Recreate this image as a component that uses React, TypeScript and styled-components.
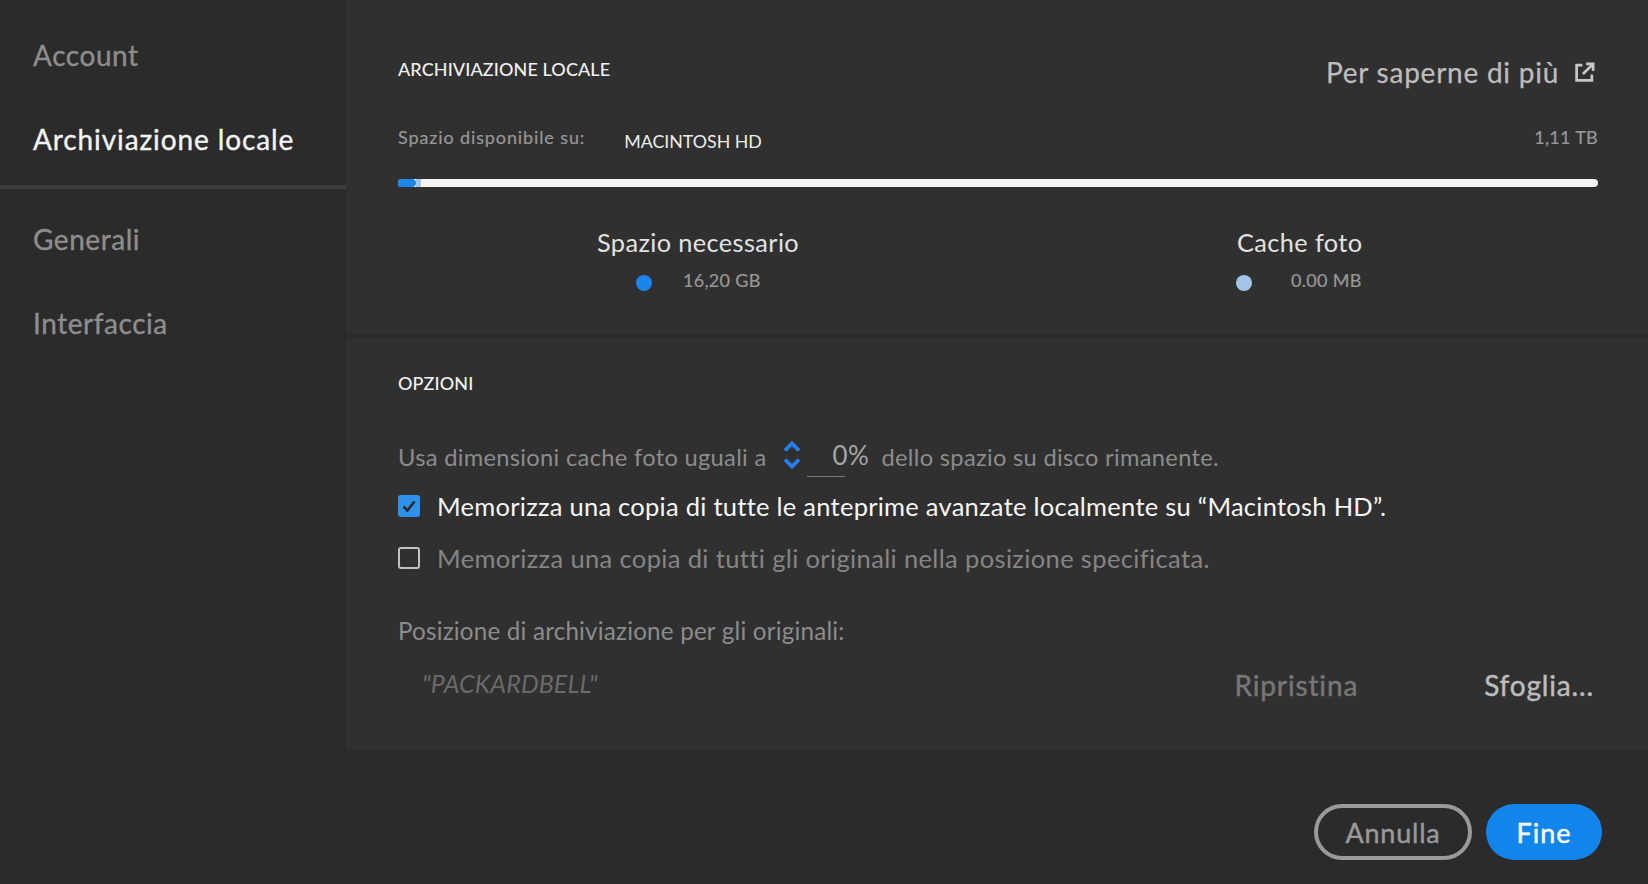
import React from "react";
import styled, { createGlobalStyle } from "styled-components";

const GlobalStyle = createGlobalStyle`
    html, body {
        margin: 0;
        padding: 0;
        height: 100%;
        background: #2b2b2b;
        overflow: hidden;
    }
    body, button {
        font-family: "Lato", "Noto Sans", sans-serif;
    }
`;

const navItems = [
    { label: "Account", active: false },
    { label: "Archiviazione locale", active: true },
    { label: "Generali", active: false },
    { label: "Interfaccia", active: false },
];

const ExternalIcon = () => (
    <svg width="21" height="21" viewBox="0 0 20 20" fill="none" stroke="#c8c8c8" strokeWidth="2.6">
        <path d="M8 3H2.5v14.5H17V12" />
        <path d="M8.5 11.5 17.5 2.5M11.5 1.8h6.7v6.7" />
    </svg>
);

const Stepper = () => (
    <svg width="18" height="30" viewBox="0 0 18 30" fill="none" stroke="#2680eb" strokeWidth="3.8">
        <path d="M2 10.5 9 3.5l7 7M2 19.5l7 7 7-7" />
    </svg>
);

export default function App() {
    return (
        <>
            <GlobalStyle />
            <Page>
                <Sidebar>
                    {navItems.map((item) => (
                        <NavItem key={item.label} $active={item.active}>
                            {item.label}
                        </NavItem>
                    ))}
                </Sidebar>
                <Main>
                    <StoragePanel>
                        <TitleRow>
                            <SectionTitle>ARCHIVIAZIONE LOCALE</SectionTitle>
                            <LearnMore>
                                Per saperne di più
                                <ExternalIcon />
                            </LearnMore>
                        </TitleRow>
                        <DiskRow>
                            <DiskLabel>Spazio disponibile su:</DiskLabel>
                            <DiskName>MACINTOSH HD</DiskName>
                            <DiskSize>1,11 TB</DiskSize>
                        </DiskRow>
                        <Bar>
                            <BarCache />
                            <BarUsed />
                        </Bar>
                        <Legend>
                            <LegendItem>
                                <LegendTitle>Spazio necessario</LegendTitle>
                                <LegendValue $indent={39} $gap={31}>
                                    <Dot $color="#1b86ea" />
                                    <SmallLabel>16,20 GB</SmallLabel>
                                </LegendValue>
                            </LegendItem>
                            <LegendItem>
                                <LegendTitle>Cache foto</LegendTitle>
                                <LegendValue $indent={-1} $gap={39}>
                                    <Dot $color="#a3c5ea" />
                                    <SmallLabel>0.00 MB</SmallLabel>
                                </LegendValue>
                            </LegendItem>
                        </Legend>
                    </StoragePanel>
                    <OptionsPanel>
                        <SectionTitle>OPZIONI</SectionTitle>
                        <CacheRow>
                            <span>Usa dimensioni cache foto uguali a</span>
                            <Stepper />
                            <PercentField>0%</PercentField>
                            <span>dello spazio su disco rimanente.</span>
                        </CacheRow>
                        <CheckRow>
                            <Checkbox $checked>
                                <svg width="16" height="16" viewBox="0 0 16 16" fill="none" stroke="#2b2b2b" strokeWidth="2.6">
                                    <path d="M2.5 8.5 6.3 12.5 13.5 3.5" />
                                </svg>
                            </Checkbox>
                            <CheckText $checked>
                                Memorizza una copia di tutte le anteprime avanzate localmente su “Macintosh HD”.
                            </CheckText>
                        </CheckRow>
                        <CheckRow>
                            <Checkbox />
                            <CheckText>Memorizza una copia di tutti gli originali nella posizione specificata.</CheckText>
                        </CheckRow>
                        <LocationLabel>Posizione di archiviazione per gli originali:</LocationLabel>
                        <LocationRow>
                            <LocationName>"PACKARDBELL"</LocationName>
                            <TextAction $dim>Ripristina</TextAction>
                            <TextAction>Sfoglia...</TextAction>
                        </LocationRow>
                    </OptionsPanel>
                    <Footer>
                        <CancelButton>Annulla</CancelButton>
                        <DoneButton>Fine</DoneButton>
                    </Footer>
                </Main>
            </Page>
        </>
    );
}

const Page = styled.div`
    display: grid;
    grid-template-columns: 346px 1fr;
    width: 1648px;
    height: 884px;
    background: #2b2b2b;
    overflow: hidden;
`;

const Sidebar = styled.nav`
    display: flex;
    flex-direction: column;
    padding-top: 13px;
`;

const NavItem = styled.div<{ $active: boolean }>`
    display: flex;
    align-items: center;
    height: 84px;
    padding-left: 33px;
    padding-bottom: ${(p) => (p.$active ? "4px" : "0")};
    margin-bottom: ${(p) => (p.$active ? "8px" : "0")};
    font-size: 28px;
    letter-spacing: ${(p) => (p.$active ? "0.9px" : "0.55px")};
    -webkit-text-stroke: 0.35px currentColor;
    color: ${(p) => (p.$active ? "#f4f4f4" : "#8e8e8e")};
    border-bottom: ${(p) => (p.$active ? "4px solid #3c3c3c" : "none")};
`;

const Main = styled.main`
    display: flex;
    flex-direction: column;
`;

const StoragePanel = styled.section`
    height: 334px;
    box-sizing: border-box;
    padding: 0 50px 0 52px;
    background: #303030;
    margin-bottom: 4px;
`;

const OptionsPanel = styled.section`
    height: 412px;
    box-sizing: border-box;
    padding: 34px 50px 0 52px;
    background: #303030;
`;

const SectionTitle = styled.h2`
    margin: 0;
    font-size: 18px;
    line-height: 22px;
    font-weight: 500;
    letter-spacing: 0.1px;
    color: #f0f0f0;
`;

const TitleRow = styled.div`
    display: flex;
    justify-content: space-between;
    align-items: center;
    height: 72px;
    padding-top: 36px;
    ${SectionTitle} {
        margin-bottom: 6px;
    }
`;

const LearnMore = styled.div`
    display: flex;
    align-items: center;
    gap: 15px;
    font-size: 28px;
    letter-spacing: 0.75px;
    -webkit-text-stroke: 0.25px currentColor;
    color: #bdbdbd;
    margin-right: 3px;
`;

const DiskRow = styled.div`
    display: flex;
    align-items: center;
    height: 30px;
    margin-top: 14px;
`;

const SmallLabel = styled.span`
    font-size: 18px;
    letter-spacing: 0.3px;
    -webkit-text-stroke: 0.2px currentColor;
    color: #989898;
`;

const DiskLabel = styled(SmallLabel)`
    letter-spacing: 0.88px;
`;

const DiskName = styled.span`
    font-size: 17.8px;
    margin: 7px 0 0 39px;
    color: #ececec;
`;

const DiskSize = styled(SmallLabel)`
    margin-left: auto;
`;

const Bar = styled.div`
    display: flex;
    height: 8px;
    margin-top: 27px;
    width: 1200px;
    background: #f4f4f4;
    border-radius: 4px;
    overflow: hidden;
    flex-direction: row-reverse;
    justify-content: flex-end;
`;

const BarUsed = styled.div`
    width: 18px;
    background: #1b86ea;
    border-radius: 0 4px 4px 0;
`;

const BarCache = styled.div`
    width: 5px;
    background: #a3c5ea;
`;

const Legend = styled.div`
    display: grid;
    grid-template-columns: 640px 1fr;
    padding: 38px 0 0 199px;
`;

const LegendItem = styled.div`
    display: flex;
    flex-direction: column;
`;

const LegendTitle = styled.div`
    font-size: 25.3px;
    line-height: 34px;
    letter-spacing: 0.4px;
    color: #e2e2e2;
`;

const LegendValue = styled.div<{ $indent: number; $gap: number }>`
    display: flex;
    align-items: center;
    gap: ${(p) => p.$gap}px;
    margin-top: 9px;
    margin-left: ${(p) => p.$indent}px;
`;

const Dot = styled.span<{ $color: string }>`
    width: 16px;
    height: 16px;
    margin-top: 7px;
    border-radius: 50%;
    background: ${(p) => p.$color};
`;

const CacheRow = styled.div`
    display: flex;
    align-items: center;
    height: 40px;
    margin-top: 43px;
    font-size: 23.7px;
    letter-spacing: 0.3px;
    color: #8c8c8c;
    svg {
        margin: -4px 6px 0 16px;
    }
`;

const PercentField = styled.span`
    width: 37px;
    height: 40px;
    margin-right: 12px;
    padding-left: 26px;
    font-size: 26px;
    line-height: 36px;
    color: #a6a6a6;
    white-space: nowrap;
    background: linear-gradient(#7a7a7a, #7a7a7a) left 39px / 38px 1px no-repeat;
`;

const CheckRow = styled.div`
    display: flex;
    align-items: center;
    gap: 17px;
    height: 52px;
    &:nth-of-type(2) {
        margin-top: 3px;
    }
`;

const Checkbox = styled.span<{ $checked?: boolean }>`
    display: flex;
    align-items: center;
    justify-content: center;
    width: 22px;
    height: 22px;
    box-sizing: border-box;
    border-radius: 3px;
    background: ${(p) => (p.$checked ? "#2d92ee" : "transparent")};
    border: ${(p) => (p.$checked ? "none" : "2px solid #c2c2c2")};
`;

const CheckText = styled.span<{ $checked?: boolean }>`
    font-size: 25.5px;
    letter-spacing: ${(p) => (p.$checked ? "0.26px" : "0.36px")};
    color: ${(p) => (p.$checked ? "#f6f6f6" : "#858585")};
`;

const LocationLabel = styled.div`
    margin-top: 30px;
    font-size: 24.2px;
    line-height: 34px;
    letter-spacing: 0.2px;
    color: #8c8c8c;
`;

const LocationRow = styled.div`
    display: flex;
    align-items: center;
    height: 40px;
    margin-top: 15px;
`;

const LocationName = styled.span`
    margin: 0 auto 0 24px;
    font-size: 25px;
    font-style: italic;
    letter-spacing: 0.1px;
    color: #6a6a6a;
`;

const TextAction = styled.span<{ $dim?: boolean }>`
    padding-top: 3px;
    font-size: 28px;
    letter-spacing: 0.85px;
    -webkit-text-stroke: 0.45px currentColor;
    color: ${(p) => (p.$dim ? "#777777" : "#bcbcbc")};
    margin: ${(p) => (p.$dim ? "0 126px 0 0" : "0 4px 0 0")};
`;

const Footer = styled.footer`
    display: flex;
    justify-content: flex-end;
    gap: 14px;
    padding: 54px 46px 0 0;
`;

const CancelButton = styled.button`
    width: 158px;
    height: 56px;
    border: 4px solid #9a9a9a;
    border-radius: 28px;
    background: transparent;
    font-size: 27px;
    letter-spacing: 0.8px;
    -webkit-text-stroke: 0.4px currentColor;
    color: #9a9a9a;
`;

const DoneButton = styled.button`
    width: 116px;
    height: 56px;
    border: none;
    border-radius: 28px;
    background: #1285ea;
    font-size: 27px;
    letter-spacing: 1px;
    -webkit-text-stroke: 0.5px currentColor;
    color: #f6faff;
`;
